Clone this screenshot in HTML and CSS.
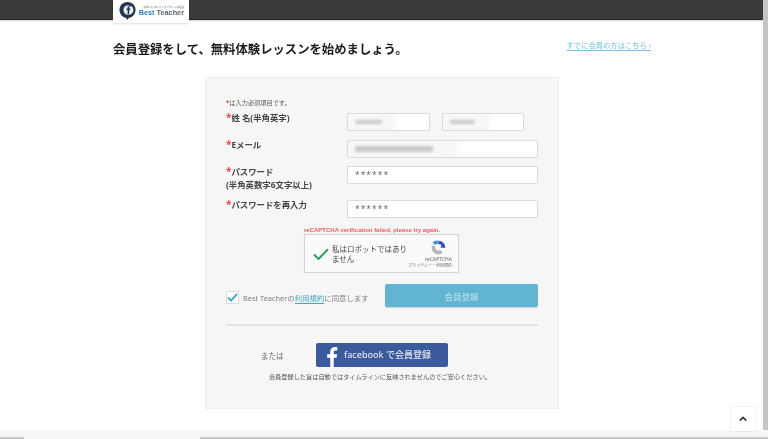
FILE: index.html
```html
<!DOCTYPE html>
<html lang="ja">
<head>
<meta charset="utf-8">
<title>会員登録</title>
<link rel="stylesheet" href="styles.css">
</head>
<body>
<div class="window">
  <div class="viewport">
    <main class="page">
      <header class="topbar">
        <a class="logo">
          <svg class="logo-mark" viewBox="0 0 20 20" width="19" height="18">
            <circle cx="10" cy="9" r="9" fill="#23364f"/>
            <path d="M8 17l2 3 2-3z" fill="#23364f"/>
            <circle cx="11" cy="9" r="5.5" fill="#e9eef2"/>
            <path d="M11.5 4.5h2M11 5v9M9 8h4" stroke="#23364f" stroke-width="1.8" fill="none"/>
          </svg>
          <span class="logo-text">
            <span class="logo-tag">子供にも 身につくオンライン英会話</span>
            <span class="logo-name"><span class="logo-best">Best</span> Teacher</span>
          </span>
        </a>
      </header>
      <div class="heading-row">
        <h1 class="title">会員登録をして、無料体験レッスンを始めましょう。</h1>
        <a class="login-link">すでに会員の方はこちら &rsaquo;</a>
      </div>
      <section class="card">
        <p class="note"><span class="req">*</span>は入力必須項目です。</p>
        <div class="row row-name">
          <label class="label"><span class="req req-big">*</span>姓 名(半角英字)</label>
          <div class="fields">
            <div class="input input-short input-autofill"><span class="smudge smudge-a"></span></div>
            <div class="input input-short input-autofill"><span class="smudge smudge-b"></span></div>
          </div>
        </div>
        <div class="row row-mail">
          <label class="label"><span class="req req-big">*</span>Eメール</label>
          <div class="fields"><div class="input input-autofill"><span class="smudge smudge-c"></span></div></div>
        </div>
        <div class="row row-pass">
          <label class="label label-two"><span class="req req-big">*</span>パスワード<br>(半角英数字6文字以上)</label>
          <div class="fields"><div class="input">******</div></div>
        </div>
        <div class="row row-again">
          <label class="label"><span class="req req-big">*</span>パスワードを再入力</label>
          <div class="fields"><div class="input">******</div></div>
        </div>
        <p class="error">reCAPTCHA verification failed, please try again.</p>
        <div class="captcha">
          <svg class="captcha-check" viewBox="0 0 16 12" width="16" height="12">
            <path d="M1 6.5l4.5 4.5L15 1.2" fill="none" stroke="#2f9e63" stroke-width="2"/>
          </svg>
          <span class="captcha-text">私はロボットではありません</span>
          <div class="captcha-brand">
            <svg viewBox="0 0 20 20" width="17" height="17">
              <path d="M10 2a8 8 0 0 1 8 8h-4a4 4 0 0 0-4-4z" fill="#2a4fc4"/>
              <path d="M18 10l-6 0 3-4z" fill="#2a4fc4"/>
              <path d="M3 4l3 3a5.5 5.5 0 0 1 4-1V2a8 8 0 0 0-7 2z" fill="#4a90e0"/>
              <path d="M2 10a8 8 0 0 0 13 6.300l-3-3A4 4 0 0 1 6 10V8L2 8z" fill="#b4b4b4"/>
            </svg>
            <span class="captcha-name">reCAPTCHA</span>
            <span class="captcha-terms">プライバシー・利用規約</span>
          </div>
        </div>
        <div class="agree-row">
          <div class="agree">
            <span class="checkbox">
              <svg viewBox="0 0 12 10" width="11" height="9"><path d="M1 5l3.500 3.500L11 1" fill="none" stroke="#42a5c9" stroke-width="2"/></svg>
            </span>
            <span class="agree-text">Best Teacherの<a class="terms">利用規約</a>に同意します</span>
          </div>
          <button class="submit" type="button">会員登録</button>
        </div>
        <hr class="rule">
        <div class="fb-row">
          <span class="or">または</span>
          <button class="fb" type="button">
            <svg class="fb-icon" viewBox="0 0 14 24" width="14" height="21">
              <path d="M9 24V13.500h3.200l.6-4H9V7c0-1.200.4-2 2-2h2V1.300C12.600 1.200 11.500 1 10.300 1 7.300 1 5 2.900 5 6.400v3.100H1.500v4H5V24z" fill="#fff"/>
            </svg>
            <span>facebook で会員登録</span>
          </button>
        </div>
        <p class="fb-note">会員登録した旨は自動ではタイムラインに反映されませんのでご安心ください。</p>
      </section>
    </main>
    <div class="scrollbar"></div>
  </div>
  <div class="hscroll"></div>
  <a class="to-top">
    <svg viewBox="0 0 10 7" width="8" height="6"><path d="M1 5.500l4-4 4 4" fill="none" stroke="#333" stroke-width="2"/></svg>
  </a>
</div>
</body>
</html>
```
FILE: styles.css
```css
* { box-sizing: border-box; }
html, body { margin: 0; padding: 0; height: 100%; overflow: hidden; background: #fff; }
body { font-family: "Noto Sans", "Noto Sans CJK JP", "Liberation Sans", sans-serif; color: #333; }
p, h1 { margin: 0; }

.window { position: relative; width: 768px; height: 439px; display: flex; flex-direction: column; overflow: hidden; filter: blur(0.45px); }
.viewport { flex: 1; display: flex; min-height: 0; }
.page { flex: 1; min-width: 0; }
.scrollbar { width: 5px; background: #c4c4c4; }
.hscroll { height: 9px; background: linear-gradient(90deg, #c8c8c8 24px, #f6f6f6 24px, #f6f6f6 200px, #c8c8c8 200px) bottom / 100% 2px no-repeat, #f6f6f6; }

.topbar { height: 20px; background: #3a3a3a; border-bottom: 1px solid #2c2c2c; padding-left: 113px; display: flex; align-items: flex-start; box-shadow: 0 1px 1px rgba(0,0,0,.15); }
.logo { width: 76px; height: 23px; flex: none; background: #fff; display: flex; align-items: center; gap: 3px; padding: 0 0 2px 5px; box-shadow: 0 1px 2px rgba(0,0,0,.12); }
.logo-mark { flex: none; }
.logo-text { display: flex; flex-direction: column; align-items: flex-end; white-space: nowrap; width: 44px; }
.logo-tag { font-size: 2.500px; line-height: 4px; color: #666; }
.logo-name { font-family: "Liberation Sans", sans-serif; font-size: 7.300px; line-height: 8px; font-weight: 700; color: #5a6470; }
.logo-best { color: #2f7fc0; }

.heading-row { display: flex; justify-content: space-between; align-items: center; padding: 21px 112px 0 113px; height: 39px; }
.title { font-size: 12.350px; line-height: 18px; font-weight: 700; color: #1c1c1c; white-space: nowrap; }
.login-link { font-size: 7.300px; line-height: 10px; color: #72c0da; border-bottom: 1px solid #72c0da; margin-top: -10px; white-space: nowrap; }

.card { width: 354px; height: 332px; margin: 18px 0 0 205px; padding: 20px 20px 0; background: #f6f6f6; border: 1px solid #f0f0f0; }
.note { font-size: 6.200px; line-height: 9px; color: #555; }
.req { color: #e8413c; font-weight: 700; }
.req-big { font-size: 10px; line-height: 0; }
.row { display: flex; }
.row-name { margin-top: 6px; }
.row-mail { margin-top: 9px; }
.row-pass { margin-top: 8px; }
.row-again { margin-top: 9px; }
.label { width: 121px; flex: none; font-size: 8.400px; line-height: 13px; font-weight: 700; color: #444; margin-top: -2px; white-space: nowrap; }
.label-two { margin-top: -1px; }
.fields { flex: 1; display: flex; gap: 12px; }
.input { flex: 1; height: 18px; background: #fff; border: 1px solid #dcdcdc; border-radius: 2px; padding-left: 7px; font-size: 8.500px; line-height: 16px; color: #666; letter-spacing: 1px; box-shadow: 0 0 1px rgba(0,0,0,.1); display: flex; align-items: center; }
.input-short { flex: none; width: 83px; }
.input-short + .input-short { width: 82px; }
.input-autofill { background: linear-gradient(90deg, #f7f7f7 0, #f7f7f7 55%, #fff 62%); }
.smudge { display: block; height: 4px; background: #b4b4b4; border-radius: 2px; filter: blur(1.500px); opacity: .7; }
.smudge-a { width: 27px; }
.smudge-b { width: 25px; }
.smudge-c { width: 78px; height: 6px; }

.error { margin: 8px 0 0 78px; font-size: 6px; line-height: 8px; font-weight: 700; color: #ee5a62; font-family: "Liberation Sans", sans-serif; white-space: nowrap; }
.captcha { width: 155px; height: 39px; margin: 0 0 0 78px; background: #fafafa; border: 1px solid #d6d6d6; box-shadow: 0 0 1px rgba(0,0,0,.1); display: flex; align-items: center; padding-left: 8px; }
.captcha-check { flex: none; }
.captcha-text { width: 78px; margin-left: 3px; font-size: 7.500px; line-height: 10px; color: #444; }
.captcha-brand { flex: 1; display: flex; flex-direction: column; align-items: flex-end; padding-right: 6px; }
.captcha-brand svg { margin-right: 5px; }
.captcha-name { font-size: 5px; line-height: 7px; color: #666; }
.captcha-terms { font-size: 4px; line-height: 6px; color: #666; white-space: nowrap; }

.agree-row { display: flex; justify-content: space-between; align-items: center; margin-top: 11px; }
.agree { display: flex; align-items: center; gap: 4px; margin-top: 4px; }
.checkbox { width: 13px; height: 13px; background: #fff; border: 1px solid #ddd; display: flex; align-items: center; justify-content: center; }
.agree-text { font-size: 7.400px; line-height: 10px; color: #808080; white-space: nowrap; }
.terms { color: #42a5c9; border-bottom: 1px solid #42a5c9; }
.submit { width: 153px; height: 23px; border: 0; border-radius: 2px; background: #61b4d2; color: #a9d6e6; font: 700 8.500px "Noto Sans CJK JP", sans-serif; box-shadow: 0 1px 1px rgba(0,0,0,.15); padding: 0; }

.rule { height: 2px; margin: 17px 0 0; border: 0; background: #e4e4e4; }
.fb-row { display: flex; align-items: center; margin-top: 17px; padding-left: 35px; }
.or { width: 55px; font-size: 7.500px; color: #666; }
.fb { width: 132px; height: 24px; border: 0; border-radius: 2px; background: #3a5a9b; color: #dfe6f2; font: 500 9px "Noto Sans", "Noto Sans CJK JP", sans-serif; display: flex; align-items: flex-end; gap: 5px; padding: 0 0 0 9px; overflow: hidden; }
.fb span { line-height: 22px; align-self: center; white-space: nowrap; }
.fb-icon { flex: none; display: block; }
.fb-note { margin: 5px 0 0; font-size: 6.200px; line-height: 10px; color: #555; text-align: center; padding-right: 4px; white-space: nowrap; }

.to-top { position: absolute; left: 731px; top: 407px; width: 24px; height: 24px; background: #fff; box-shadow: 0 0 2px rgba(0,0,0,.15); display: flex; align-items: center; justify-content: center; }
```
